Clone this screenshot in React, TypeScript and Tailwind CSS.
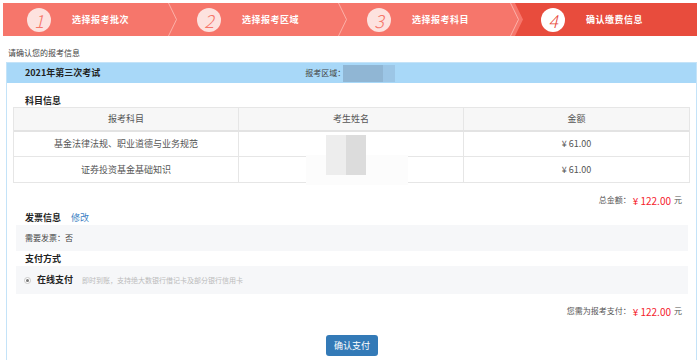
import React from "react";

const steps = [
  { n: "1", label: "选择报考批次", w: "w-[170px]" },
  { n: "2", label: "选择报考区域", w: "w-[170px]" },
  { n: "3", label: "选择报考科目", w: "w-[172px]" },
];

function Chevron() {
  return (
    <svg
      className="absolute right-[-4px] top-0 h-[33px] w-[9px]"
      viewBox="0 0 9 33"
      fill="none"
    >
      <path d="M0.5 0 L8.5 16.5 L0.5 33" stroke="#fbb0a8" strokeWidth="1" />
    </svg>
  );
}

function StepBar() {
  return (
    <div className="mx-[3px] mt-[3px] flex h-[33px] bg-[#f6766b] text-white">
      {steps.map((s) => (
        <div key={s.n} className={`relative flex h-full ${s.w} items-center pl-[24px]`}>
          <span className="flex h-[24px] w-[24px] items-center justify-center rounded-full bg-[#fde2df] text-[18px] leading-none font-light text-[#f6766b] italic">
            {s.n}
          </span>
          <span className="ml-[21px] text-[9px] font-bold tracking-[0.5px]">{s.label}</span>
          <Chevron />
        </div>
      ))}
      <div className="relative flex h-full flex-1 items-center bg-[#e84c3d] pl-[26px] [clip-path:polygon(0_0,100%_0,100%_100%,0_100%,8px_50%)]">
        <span className="flex h-[24px] w-[24px] items-center justify-center rounded-full bg-white text-[18px] leading-none font-light text-[#e84c3d] italic">
          4
        </span>
        <span className="ml-[21px] text-[9px] font-bold tracking-[0.5px]">确认缴费信息</span>
      </div>
    </div>
  );
}

function SubjectTable() {
  const rows = [
    { name: "基金法律法规、职业道德与业务规范", fee: "¥ 61.00" },
    { name: "证券投资基金基础知识", fee: "¥ 61.00" },
  ];
  return (
    <div className="relative border border-[#e6e6e6] text-[9px] text-[#555]">
      <div className="grid h-[24px] grid-cols-[225px_225px_1fr] border-b-2 border-[#e3e3e3] bg-[#f7f7f7]">
        <div className="flex items-center justify-center border-r border-[#e6e6e6]">报考科目</div>
        <div className="flex items-center justify-center border-r border-[#e6e6e6]">考生姓名</div>
        <div className="flex items-center justify-center">金额</div>
      </div>
      {rows.map((r, i) => (
        <div
          key={r.name}
          className={`grid h-[25px] grid-cols-[225px_225px_1fr] ${i === 0 ? "border-b border-[#e6e6e6]" : ""}`}
        >
          <div className="flex items-center justify-center border-r border-[#e6e6e6]">{r.name}</div>
          <div className="border-r border-[#e6e6e6]" />
          <div className="flex items-center justify-center">{r.fee}</div>
        </div>
      ))}
      {/* blurred name */}
      <div className="absolute top-[47px] left-[292px] h-[30px] w-[102px] bg-[#fcfcfc]" />
      <div className="absolute top-[27px] left-[312px] flex h-[40px]">
        <div className="h-full w-[20px] bg-[#ededed]" />
        <div className="h-full w-[20px] bg-[#dcdcdc]" />
      </div>
    </div>
  );
}

export default function App() {
  return (
    <div className="h-[360px] w-[700px] overflow-hidden bg-white font-['Noto_Sans_CJK_SC','Noto_Sans',sans-serif] text-[#333]">
      <StepBar />
      <p className="mt-[11px] ml-[8px] h-[12px] text-[8px] leading-[12px] text-[#444]">请确认您的报考信息</p>

      <div className="mt-[3px] mr-[3px] ml-[6px] border border-[#c4e3f8]">
        <div className="flex h-[20px] items-center bg-[#a8d8f8]">
          <span className="ml-[18px] text-[9px] font-bold text-[#222]">2021年第三次考试</span>
          <span className="ml-[205px] text-[8px] text-[#444]">报考区域：</span>
          <span className="ml-[-2px] flex h-[17px]">
            <span className="h-full w-[40px] bg-[#90b6d4]" />
            <span className="h-full w-[12px] bg-[#9cc6e6]" />
          </span>
        </div>

        <div className="px-[6px]">
          <p className="mt-[12px] h-[12px] pl-[12px] text-[9px] leading-[12px] font-bold text-[#222]">科目信息</p>
          <SubjectTable />

          <div className="mt-[10px] flex h-[14px] items-center justify-end pr-[8px]">
            <span className="text-[8px] text-[#555]">总金额：</span>
            <span className="ml-[2px] text-[10px] text-[#f5222d]">¥ 122.00</span>
            <span className="ml-[3px] text-[8px] text-[#555]">元</span>
          </div>

          <div className="mt-[4px] flex h-[14px] items-center pl-[12px]">
            <span className="text-[9px] font-bold text-[#222]">发票信息</span>
            <span className="ml-[10px] text-[9px] text-[#3c7fc4]">修改</span>
          </div>
          <div className="mr-[2px] ml-[3px] flex h-[26px] items-center bg-[#f6f7f9] pl-[9px]">
            <span className="text-[8px] text-[#444]">需要发票：否</span>
          </div>

          <div className="mt-[1px] flex h-[14px] items-center pl-[12px]">
            <span className="text-[9px] font-bold text-[#222]">支付方式</span>
          </div>
          <div className="mr-[2px] ml-[3px] flex h-[28px] items-center bg-[#f6f7f9] pl-[8px]">
            <span className="flex h-[7px] w-[7px] items-center justify-center rounded-full border border-[#c8c8c8] bg-white">
              <span className="h-[3px] w-[3px] rounded-full bg-[#777]" />
            </span>
            <span className="ml-[6px] text-[9px] font-bold text-[#222]">在线支付</span>
            <span className="ml-[9px] text-[7px] text-[#bbb]">即时到账，支持绝大数银行借记卡及部分银行信用卡</span>
          </div>

          <div className="mt-[10px] flex h-[14px] items-center justify-end pr-[8px]">
            <span className="text-[8px] text-[#555]">您需为报考支付：</span>
            <span className="ml-[2px] text-[10px] text-[#f5222d]">¥ 122.00</span>
            <span className="ml-[3px] text-[8px] text-[#555]">元</span>
          </div>

          <div className="mt-[17px] flex pb-[20px]">
            <button
              type="button"
              className="ml-[313px] h-[21px] w-[52px] rounded-[3px] bg-[#337ab7] text-[9px] text-white"
            >
              确认支付
            </button>
          </div>
        </div>
      </div>
    </div>
  );
}
